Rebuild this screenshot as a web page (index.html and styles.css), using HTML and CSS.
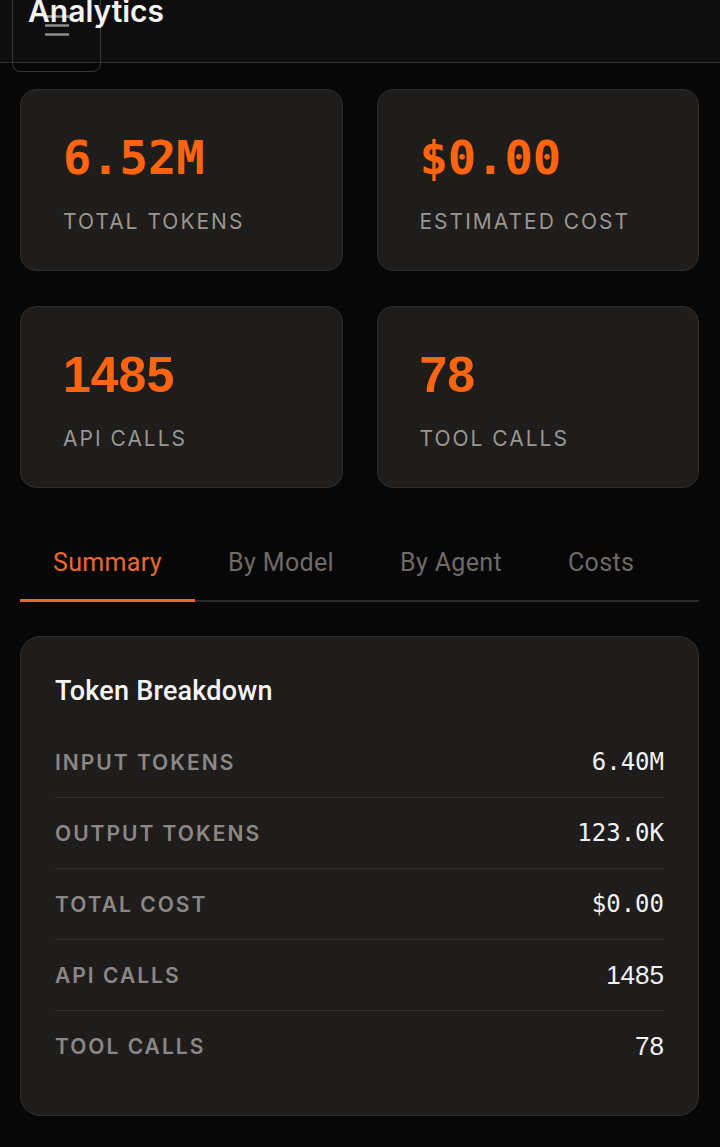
FILE: index.html
```html
<!DOCTYPE html>
<html lang="en">
  <head>
    <meta charset="UTF-8" />
    <meta name="viewport" content="width=device-width, initial-scale=1.0" />
    <title>Analytics</title>
    <link rel="stylesheet" href="styles.css">
  </head>
  <body>
    <header class="topbar">
      <button type="button" class="menu-btn" aria-label="Menu">
        <svg width="26" height="22" viewBox="0 0 26 22">
          <path d="M1 2.5h24M1 11.5h24M1 20.5h24" stroke="#8f8b88" stroke-width="2.6" fill="none" />
        </svg>
      </button>
      <h1 class="page-title">Analytics</h1>
    </header>

    <main class="content">
      <section class="stats">
        <div class="stat-card">
          <div class="stat-value mono">6.52M</div>
          <div class="stat-label">Total Tokens</div>
        </div>
        <div class="stat-card">
          <div class="stat-value mono">$0.00</div>
          <div class="stat-label">Estimated Cost</div>
        </div>
        <div class="stat-card">
          <div class="stat-value">1485</div>
          <div class="stat-label">API Calls</div>
        </div>
        <div class="stat-card">
          <div class="stat-value">78</div>
          <div class="stat-label">Tool Calls</div>
        </div>
      </section>

      <nav class="tabs">
        <button type="button" class="tab active">Summary</button>
        <button type="button" class="tab">By Model</button>
        <button type="button" class="tab">By Agent</button>
        <button type="button" class="tab">Costs</button>
      </nav>

      <section class="breakdown">
        <h2 class="breakdown-title">Token Breakdown</h2>
        <div class="row">
          <span class="row-label">Input Tokens</span>
          <span class="row-value mono">6.40M</span>
        </div>
        <div class="row">
          <span class="row-label">Output Tokens</span>
          <span class="row-value mono">123.0K</span>
        </div>
        <div class="row">
          <span class="row-label">Total Cost</span>
          <span class="row-value mono">$0.00</span>
        </div>
        <div class="row">
          <span class="row-label">API Calls</span>
          <span class="row-value">1485</span>
        </div>
        <div class="row">
          <span class="row-label">Tool Calls</span>
          <span class="row-value">78</span>
        </div>
      </section>
    </main>
  </body>
</html>
```

FILE: styles.css
```css
body {
  margin: 0;
  background-color: #080707;
  color: #f2f0ee;
  font-family: Inter, "Liberation Sans", Arial, sans-serif;
}

.topbar {
  display: flow-root;
  position: relative;
  height: 62px;
  background-color: #0f0e0e;
  border-bottom: 1px solid #302f2e;
  padding-left: 28px;
}
.page-title {
  position: relative;
  z-index: 2;
  margin: -9px 0 0;
  font-size: 30px;
  font-weight: 600;
  line-height: 40px;
  color: #f4f2f0;
}
.menu-btn {
  position: absolute;
  left: 12px;
  top: -10px;
  width: 89px;
  height: 82px;
  padding: 0 0 12px;
  border: 1px solid #3a3938;
  border-radius: 8px;
  background: transparent;
  display: flex;
  align-items: center;
  justify-content: center;
  z-index: 1;
}

.content {
  padding: 26px 21px 30px 20px;
}

.stats {
  display: grid;
  grid-template-columns: 1fr 1fr;
  column-gap: 34px;
  row-gap: 35px;
}
.stat-card {
  height: 182px;
  box-sizing: border-box;
  padding: 40px 42px 0;
  background-color: #1e1d1c;
  border: 1px solid #2f2e2d;
  border-radius: 16px;
}
.stat-value {
  font-family: "Liberation Sans", Arial, sans-serif;
  font-size: 50px;
  font-weight: 700;
  line-height: 56px;
  color: #ff6510;
}
.stat-value.mono {
  font-family: "DejaVu Sans Mono", monospace;
  font-size: 47px;
}
.stat-label {
  margin-top: 23px;
  font-size: 21px;
  letter-spacing: 2px;
  text-transform: uppercase;
  color: #9a9692;
}

.tabs {
  display: flex;
  margin-top: 42px;
  border-bottom: 2px solid #2b2a29;
}
.tab {
  padding: 18px 33px 22px;
  margin-bottom: -2px;
  border: none;
  border-bottom: 3px solid transparent;
  background: none;
  font-family: Roboto, "Liberation Sans", sans-serif;
  font-size: 25px;
  letter-spacing: 0.35px;
  color: #6e6a67;
}
.tab.active {
  color: #ea6a2c;
  border-bottom-color: #e8692a;
}

.breakdown {
  margin-top: 34px;
  padding: 38px 34px 34px;
  background-color: #1e1d1c;
  border: 1px solid #2f2e2d;
  border-radius: 20px;
}
.breakdown-title {
  margin: 0 0 20px;
  font-family: Roboto, "Liberation Sans", sans-serif;
  font-size: 27px;
  font-weight: 500;
  letter-spacing: 0.2px;
  color: #f6f4f2;
}
.row {
  display: flex;
  justify-content: space-between;
  align-items: center;
  height: 70px;
  border-bottom: 1px solid #323130;
}
.row:last-child {
  border-bottom: none;
}
.row-label {
  font-size: 21px;
  font-weight: 600;
  letter-spacing: 2px;
  text-transform: uppercase;
  color: #8c8784;
}
.row-value {
  font-family: "Liberation Sans", Arial, sans-serif;
  font-size: 26px;
  color: #f4f2f0;
}
.row-value.mono {
  font-family: "DejaVu Sans Mono", monospace;
  font-size: 24px;
}
```
